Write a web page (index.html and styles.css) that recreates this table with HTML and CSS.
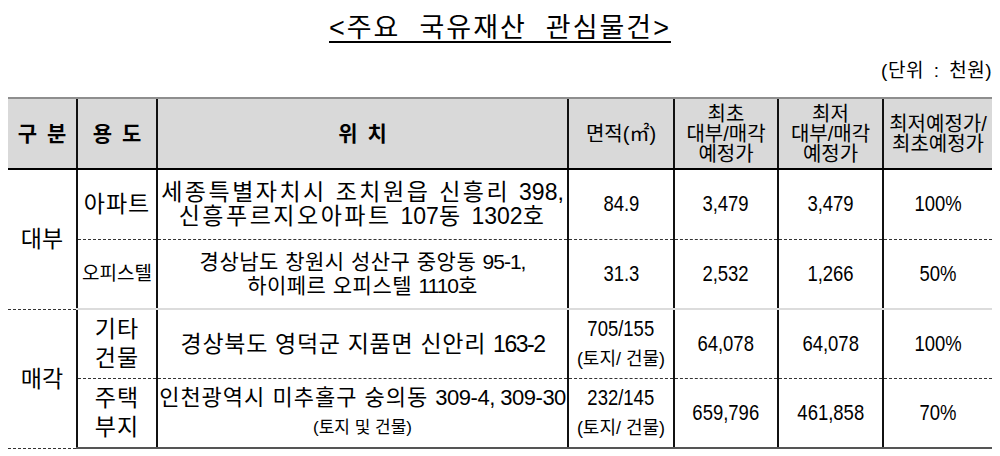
FILE: index.html
```html
<!DOCTYPE html>
<html lang="ko">
<head>
<meta charset="utf-8">
<title>주요 국유재산 관심물건</title>
<link rel="stylesheet" href="styles.css">
</head>
<body>
<div class="page">
  <h1 class="title"><span>&lt;주요  국유재산  관심물건&gt;</span></h1>
  <p class="unit">(단위 : 천원)</p>
  <table class="grid">
    <colgroup>
      <col class="c-gubun"><col class="c-use"><col class="c-loc"><col class="c-area"><col class="c-first"><col class="c-low"><col class="c-ratio">
    </colgroup>
    <thead>
      <tr class="head">
        <th class="first h-big">구 분</th>
        <th class="h-big">용 도</th>
        <th class="h-big">위 치</th>
        <th>면적(㎡)</th>
        <th>최초<br>대부/매각<br>예정가</th>
        <th>최저<br>대부/매각<br>예정가</th>
        <th>최저예정가/<br>최초예정가</th>
      </tr>
    </thead>
    <tbody>
      <tr class="r1 dash">
        <td class="first kind" rowspan="2">대부</td>
        <td class="use">아파트</td>
        <td class="loc l1">세종특별자치시 조치원읍 신흥리 <span class="d">398,</span><br>신흥푸르지오아파트 <span class="d">107</span>동 <span class="d">1302</span>호</td>
        <td class="num"><span class="n">84.9</span></td>
        <td class="num"><span class="n">3,479</span></td>
        <td class="num"><span class="n">3,479</span></td>
        <td class="num"><span class="n">100%</span></td>
      </tr>
      <tr class="r2 sep">
        <td class="use sm">오피스텔</td>
        <td class="loc l2">경상남도 창원시 성산구 중앙동 <span class="d">95-1,</span><br>하이페르 오피스텔 <span class="d">1110</span>호</td>
        <td class="num"><span class="n">31.3</span></td>
        <td class="num"><span class="n">2,532</span></td>
        <td class="num"><span class="n">1,266</span></td>
        <td class="num"><span class="n">50%</span></td>
      </tr>
      <tr class="r3 dash">
        <td class="first kind" rowspan="2">매각</td>
        <td class="use tall">기타<br>건물</td>
        <td class="loc l3">경상북도 영덕군 지품면 신안리 <span class="d">163-2</span></td>
        <td class="num area"><span class="n">705/155</span><br><span class="small">(토지/ 건물)</span></td>
        <td class="num"><span class="n">64,078</span></td>
        <td class="num"><span class="n">64,078</span></td>
        <td class="num"><span class="n">100%</span></td>
      </tr>
      <tr class="r4 last">
        <td class="use tall">주택<br>부지</td>
        <td class="loc l4">인천광역시 미추홀구 숭의동 <span class="d">309-4, 309-30</span><br><span class="small">(토지 및 건물)</span></td>
        <td class="num area"><span class="n">232/145</span><br><span class="small">(토지/ 건물)</span></td>
        <td class="num"><span class="n">659,796</span></td>
        <td class="num"><span class="n">461,858</span></td>
        <td class="num"><span class="n">70%</span></td>
      </tr>
    </tbody>
  </table>
</div>
</body>
</html>
```

FILE: styles.css
```css
body {
  margin: 0;
  background: #fff;
  color: #000;
  font-family: "Liberation Sans", "Noto Sans CJK KR", sans-serif;
}

.page {
  padding: 0 8px;
}

.title {
  margin: 13px 0 0;
  text-align: center;
  font-size: 27px;
  line-height: 30px;
  font-weight: normal;
  letter-spacing: 2px;
  white-space: pre;
}

.title span {
  text-decoration: underline;
  text-decoration-thickness: 2px;
  text-underline-offset: 4px;
}

.unit {
  margin: 17px 0 0;
  text-align: right;
  font-size: 19px;
  line-height: 22px;
  letter-spacing: 0.5px;
  word-spacing: 4px;
}

.grid {
  margin-top: 15px;
  width: 984px;
  border-collapse: collapse;
  table-layout: fixed;
}

.c-gubun { width: 69px; }
.c-use { width: 80px; }
.c-loc { width: 411px; }
.c-area { width: 106px; }
.c-first { width: 104px; }
.c-low { width: 105px; }
.c-ratio { width: 109px; }

.grid th,
.grid td {
  padding: 0;
  text-align: center;
  vertical-align: middle;
  border-left: 2px solid #111;
}

.grid th.first,
.grid td.first {
  border-left: none;
}

.head {
  height: 71px;
}

.grid th {
  background: #d9d9d9;
  border-top: 2px solid #8e8e8e;
  border-bottom: 2px solid #000;
  font-size: 20px;
  line-height: 20px;
  letter-spacing: 0;
  font-weight: normal;
}

.grid th.h-big {
  font-size: 21px;
  font-weight: bold;
  word-spacing: 4px;
}

.r1, .r2, .r4 { height: 70px; }
.r3 { height: 69px; }

.dash td {
  border-bottom: 1px dashed #333;
}

.sep td {
  border-bottom: 2px solid #dcdcdc;
}

.last td {
  border-bottom: 2px solid #555;
}

.kind {
  font-size: 23px;
  line-height: 26px;
}

.use {
  font-size: 23px;
  line-height: 26px;
  letter-spacing: 1px;
}

.use.sm {
  font-size: 19px;
  letter-spacing: 0;
}

.use.tall {
  line-height: 29px;
}

.loc {
  line-height: 24px;
}

.l1 {
  font-size: 23px;
  letter-spacing: 2.5px;
}

.l2 {
  font-size: 21px;
  letter-spacing: 0.5px;
}

.l3 {
  font-size: 23px;
  letter-spacing: 0.7px;
}

.l4 {
  font-size: 22px;
  letter-spacing: 1px;
  line-height: 28px;
}

.d {
  letter-spacing: -1.5px;
}

.l1 .d {
  letter-spacing: 0;
}

.l2 .d {
  letter-spacing: -1px;
}

.l4 .d {
  letter-spacing: -0.5px;
}

.num {
  font-size: 22px;
  line-height: 30px;
}

.n {
  display: inline-block;
  transform: scaleX(0.84);
}

.area {
  line-height: 29px;
}

.small {
  font-size: 18px;
}

.loc .small {
  font-size: 17px;
  letter-spacing: 0;
}
```
